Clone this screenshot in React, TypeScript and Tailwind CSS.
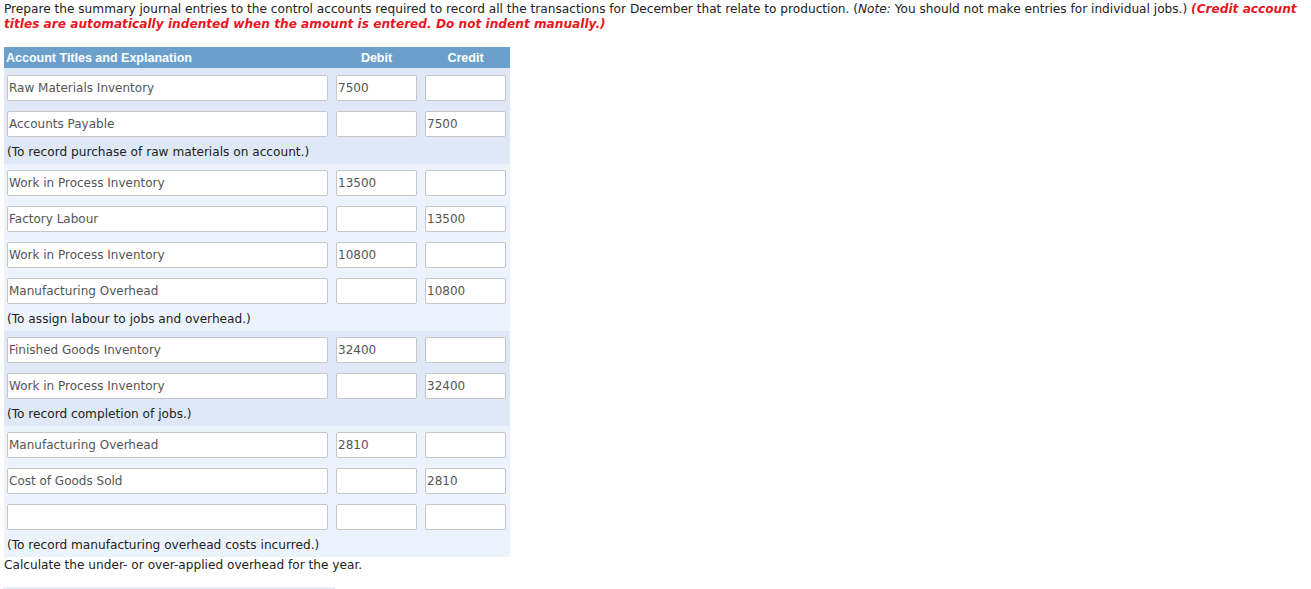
import React from "react";

type Line = { account: string; debit: string; credit: string };
type Entry = { lines: Line[]; note: string };

const entries: Entry[] = [
  {
    lines: [
      { account: "Raw Materials Inventory", debit: "7500", credit: "" },
      { account: "Accounts Payable", debit: "", credit: "7500" },
    ],
    note: "(To record purchase of raw materials on account.)",
  },
  {
    lines: [
      { account: "Work in Process Inventory", debit: "13500", credit: "" },
      { account: "Factory Labour", debit: "", credit: "13500" },
      { account: "Work in Process Inventory", debit: "10800", credit: "" },
      { account: "Manufacturing Overhead", debit: "", credit: "10800" },
    ],
    note: "(To assign labour to jobs and overhead.)",
  },
  {
    lines: [
      { account: "Finished Goods Inventory", debit: "32400", credit: "" },
      { account: "Work in Process Inventory", debit: "", credit: "32400" },
    ],
    note: "(To record completion of jobs.)",
  },
  {
    lines: [
      { account: "Manufacturing Overhead", debit: "2810", credit: "" },
      { account: "Cost of Goods Sold", debit: "", credit: "2810" },
      { account: "", debit: "", credit: "" },
    ],
    note: "(To record manufacturing overhead costs incurred.)",
  },
];

function Field({ value, wide }: { value: string; wide?: boolean }) {
  return (
    <div
      className={
        (wide ? "w-[321px] " : "w-[81px] ") +
        "h-[26px] flex items-center bg-white border border-[#c6c6c6] rounded-[2px] px-[1px] text-[12px] text-[#555] leading-none"
      }
    >
      {value}
    </div>
  );
}

export default function App() {
  return (
    <div className="px-[4px] pt-[2px] bg-white h-[589px] overflow-hidden text-[#222]" style={{ fontFamily: '"DejaVu Sans", Verdana, sans-serif' }}>
      <p className="text-[12.15px] leading-[15px] w-[1300px]">
        Prepare the summary journal entries to the control accounts required to record all the transactions for December that
        relate to production. (<i>Note:</i> You should not make entries for individual jobs.){" "}
        <b className="italic text-[#e8171f]">
          (Credit account titles are automatically indented when the amount is entered. Do not indent manually.)
        </b>
      </p>

      <div className="mt-[15px] w-[506px]">
        <div
          className="h-[21px] flex items-center pt-[1px] bg-[#6b9fcc] text-white text-[12.5px] font-bold"
          style={{ fontFamily: '"Liberation Sans", Tahoma, sans-serif' }}
        >
          <div className="w-[328px] pl-[2px]">Account Titles and Explanation</div>
          <div className="w-[89px] text-center">Debit</div>
          <div className="w-[89px] text-center">Credit</div>
        </div>

        {entries.map((entry, i) => (
          <div key={i} className={(i % 2 === 0 ? "bg-[#dee8f7] " : "bg-[#edf3fc] ") + (i === 0 ? "pt-[2px]" : "pt-[1px]")}>
            {entry.lines.map((line, j) => (
              <div key={j} className="flex items-center h-[36px]">
                <div className="w-[328px] pl-[3px]">
                  <Field value={line.account} wide />
                </div>
                <div className="w-[89px] pl-[4px]">
                  <Field value={line.debit} />
                </div>
                <div className="w-[89px] pl-[4px]">
                  <Field value={line.credit} />
                </div>
              </div>
            ))}
            <div className="h-[22px] flex items-center pl-[3px] pb-[1px] text-[12.15px] text-[#222]">{entry.note}</div>
          </div>
        ))}
      </div>

      <p className="text-[12.15px] leading-[15px] mt-[1px]">Calculate the under- or over-applied overhead for the year.</p>
      <div className="mt-[14px] -ml-[1px] w-[332px] h-[40px] bg-[#e6eef9]" />
    </div>
  );
}
